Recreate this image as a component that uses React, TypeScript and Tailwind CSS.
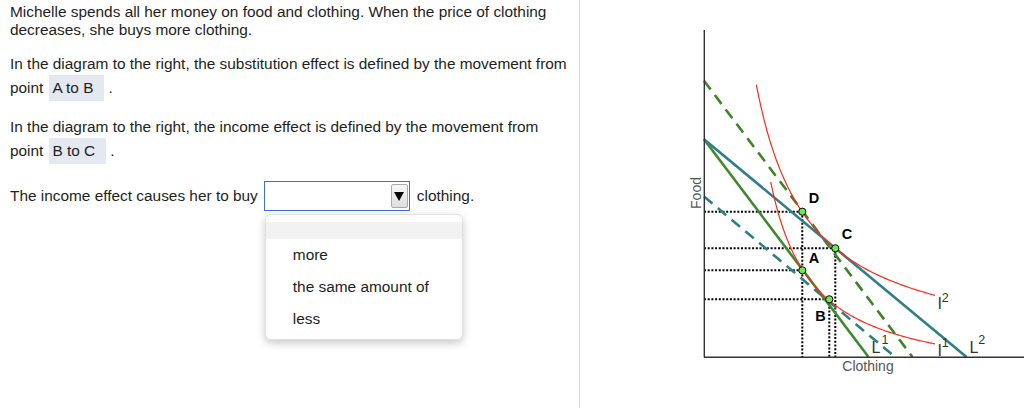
import React from "react";

function curve(f: (u: number) => number, u0: number, u1: number) {
  const pts: string[] = [];
  const n = 80;
  for (let i = 0; i <= n; i++) {
    const u = u0 + ((u1 - u0) * i) / n;
    pts.push(`${(704 + u).toFixed(2)},${(357 - f(u)).toFixed(2)}`);
  }
  return "M" + pts.join(" L");
}

const I2 = curve((u) => 14250 / u, 52.3, 231);
const I1 = curve((u) => 8470 / (u - 25) - 28, 66.7, 231);

function Chart() {
  const dot = { stroke: "#000", strokeWidth: 2, strokeDasharray: "2 1.7", fill: "none" } as const;
  const labelFont = "'Liberation Sans', Arial, sans-serif";
  return (
    <svg width={444} height={411} viewBox="580 0 444 411" className="block">
      {/* dotted guides */}
      <line x1={704} y1={211.7} x2={802.3} y2={211.7} {...dot} />
      <line x1={704} y1={248.3} x2={835.3} y2={248.3} {...dot} />
      <line x1={704} y1={270.3} x2={802.3} y2={270.3} {...dot} />
      <line x1={704} y1={299.3} x2={829.3} y2={299.3} {...dot} />
      <line x1={802.3} y1={211.7} x2={802.3} y2={357} {...dot} />
      <line x1={829.3} y1={299.3} x2={829.3} y2={357} {...dot} />
      <line x1={835.3} y1={248.3} x2={835.3} y2={357} {...dot} />

      {/* budget lines */}
      <line x1={704} y1={80.7} x2={912.5} y2={357} stroke="#3b8526" strokeWidth={2.6} strokeDasharray="11 7" />
      <line x1={704} y1={196.5} x2={895} y2={357} stroke="#2f7f86" strokeWidth={2.6} strokeDasharray="11 7" />
      <line x1={704} y1={139.3} x2={868.5} y2={357} stroke="#3d8a2c" strokeWidth={2.6} />
      <line x1={704} y1={139.3} x2={966.5} y2={357} stroke="#2f7f86" strokeWidth={2.6} />

      {/* indifference curves */}
      <path d={I2} stroke="#ff2a1a" strokeWidth={1.2} fill="none" />
      <path d={I1} stroke="#ff2a1a" strokeWidth={1.2} fill="none" />

      {/* axes */}
      <line x1={704.3} y1={30} x2={704.3} y2={357.5} stroke="#333" strokeWidth={1.4} />
      <line x1={704} y1={357.3} x2={1024} y2={357.3} stroke="#333" strokeWidth={1.4} />

      {/* points */}
      {[
        [802.3, 211.7],
        [835.3, 248.3],
        [802.3, 270.3],
        [829.3, 299.3],
      ].map(([x, y], i) => (
        <circle key={i} cx={x} cy={y} r={3.6} fill="#6fe84a" stroke="#000" strokeWidth={1} />
      ))}

      {/* point labels */}
      <g fontFamily={labelFont} fontWeight="bold" fontSize={14.5} fill="#000" textAnchor="middle">
        <text x={814} y={202.5}>D</text>
        <text x={847} y={238.5}>C</text>
        <text x={814} y={262.5}>A</text>
        <text x={820.5} y={320.5}>B</text>
      </g>

      {/* curve and line labels */}
      <g fontFamily={labelFont} fill="#333">
        <text x={871.5} y={352.5} fontSize={16}>L</text>
        <text x={881.5} y={344} fontSize={12.5}>1</text>
        <text x={969.5} y={352.5} fontSize={16}>L</text>
        <text x={978.3} y={344} fontSize={12.5}>2</text>
        <text x={937.5} y={309} fontSize={16}>I</text>
        <text x={941.8} y={301.7} fontSize={12.5}>2</text>
        <text x={937.5} y={356} fontSize={16}>I</text>
        <text x={941.8} y={347.3} fontSize={12.5}>1</text>
      </g>

      {/* axis titles */}
      <text x={868} y={371} fontFamily={labelFont} fontSize={14} fill="#555" textAnchor="middle">
        Clothing
      </text>
      <text
        x={0}
        y={0}
        fontFamily={labelFont}
        fontSize={14}
        fill="#555"
        textAnchor="middle"
        transform="translate(701 193) rotate(-90)"
      >
        Food
      </text>
    </svg>
  );
}

function Chip({ children }: { children: React.ReactNode }) {
  return (
    <span className="ml-[6px] h-[26px] flex items-center bg-[#e4e8f1] pl-[3px] pr-[11px]">{children}</span>
  );
}

export default function App() {
  return (
    <div className="flex w-[1024px] h-[411px] bg-white overflow-hidden font-['Liberation_Sans',Arial,sans-serif]">
      <div className="w-[580px] h-[408px] shrink-0 border-r border-[#d6d6d6] pl-[10px] pt-[3px] text-[15.4px] leading-[18px] text-[#1e1e1e]">
        <div>Michelle spends all her money on food and clothing. When the price of clothing</div>
        <div>decreases, she buys more clothing.</div>

        <div className="mt-[16px]">In the diagram to the right, the substitution effect is defined by the movement from</div>
        <div className="mt-[2px] flex items-center h-[26px]">
          <span>point</span>
          <Chip>A to B</Chip>
          <span className="ml-[4px]">.</span>
        </div>

        <div className="mt-[17px]">In the diagram to the right, the income effect is defined by the movement from</div>
        <div className="mt-[2px] flex items-center h-[26px]">
          <span>point</span>
          <Chip>B to C</Chip>
          <span className="ml-[4px]">.</span>
        </div>

        <div className="mt-[17px] flex items-center h-[30px]">
          <span>The income effect causes her to buy</span>
          <div className="relative ml-[6px]">
            <div className="w-[146px] h-[30px] border border-[#3c6fd6] bg-white flex items-center justify-end pr-[1px]">
              <div className="w-[17px] h-[24px] border border-[#a9a9a9] rounded-[2px] bg-gradient-to-b from-[#f7f7f7] to-[#dedede] flex items-center justify-center">
                <svg width="10" height="9" viewBox="0 0 10 9">
                  <polygon points="0,0 10,0 5,9" fill="#000" />
                </svg>
              </div>
            </div>
            <div className="absolute left-[1px] top-[33px] w-[198px] h-[126px] bg-white rounded-[6px] border border-[#e2e2e2] shadow-[0_3px_8px_rgba(0,0,0,0.22)] pt-[7px] overflow-hidden">
              <div className="h-[17px] bg-[#f2f2f2]" />
              <div className="h-[32px] flex items-center pl-[27px]">more</div>
              <div className="h-[32px] flex items-center pl-[27px]">the same amount of</div>
              <div className="h-[32px] flex items-center pl-[27px]">less</div>
            </div>
          </div>
          <span className="ml-[7px]">clothing.</span>
        </div>
      </div>
      <div className="flex-1">
        <Chart />
      </div>
    </div>
  );
}
